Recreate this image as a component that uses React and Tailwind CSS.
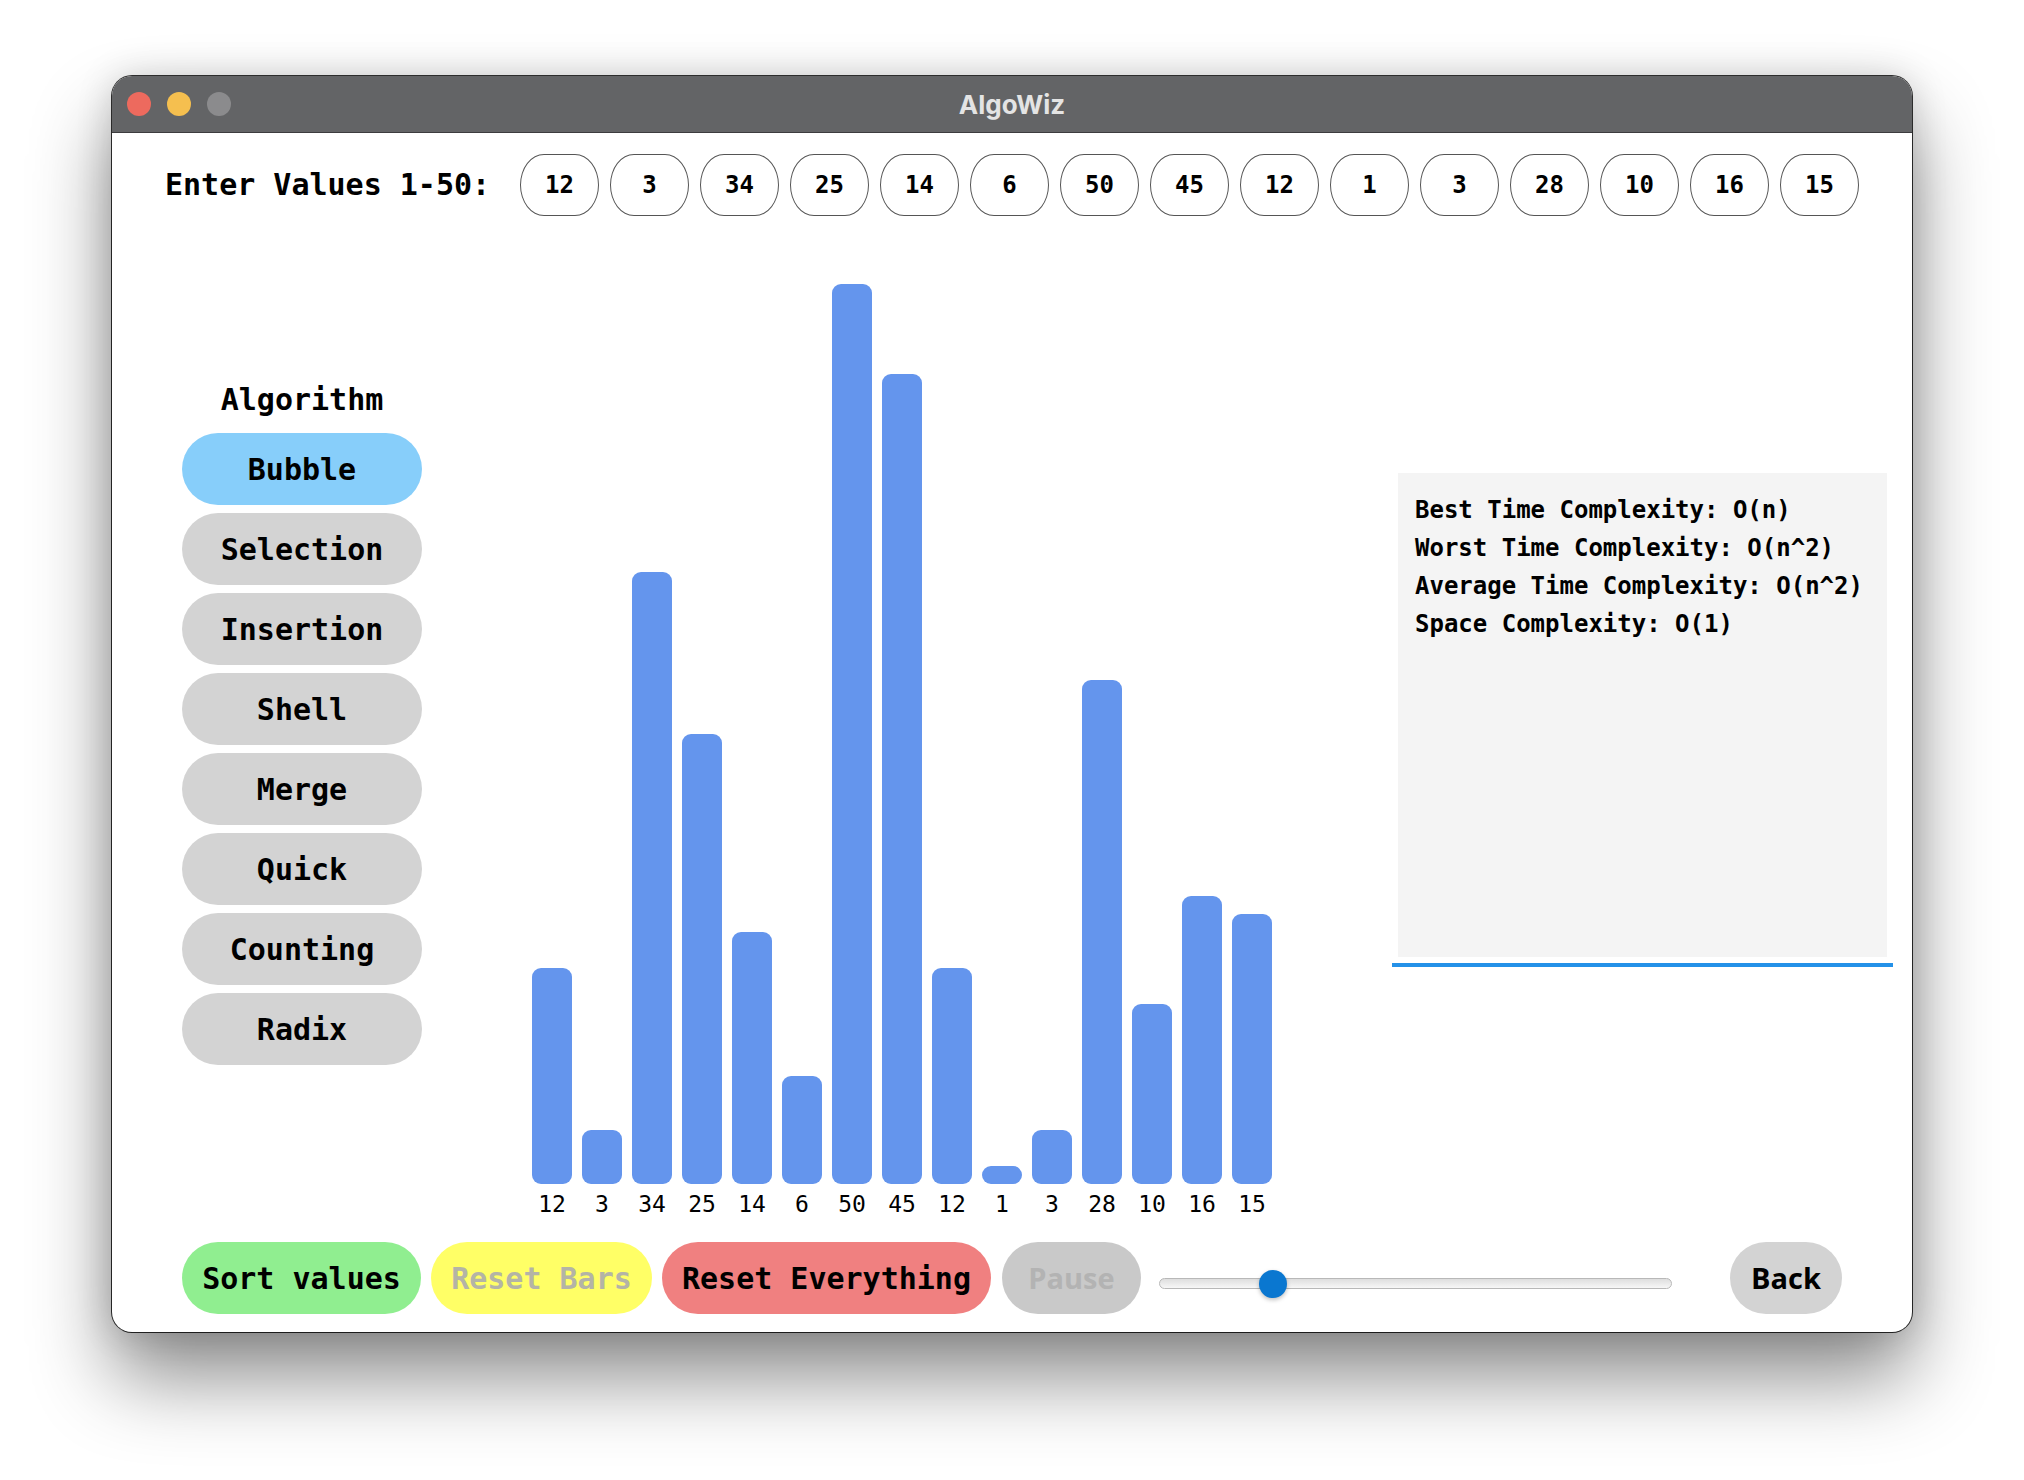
import { useState } from "react";

const values = [12, 3, 34, 25, 14, 6, 50, 45, 12, 1, 3, 28, 10, 16, 15];
const algorithms = ["Bubble", "Selection", "Insertion", "Shell", "Merge", "Quick", "Counting", "Radix"];

const complexity = [
  "Best Time Complexity: O(n)",
  "Worst Time Complexity: O(n^2)",
  "Average Time Complexity: O(n^2)",
  "Space Complexity: O(1)",
];

const App = () => {
  const [selected, setSelected] = useState("Bubble");

  return (
    <div className="w-[2024px] h-[1480px] overflow-hidden bg-white pt-[76px] pl-[112px] font-['DejaVu_Sans_Mono',monospace]">
      {/* window */}
      <div className="w-[1800px] rounded-[20px] overflow-hidden bg-white shadow-[0_0_0_1px_rgba(0,0,0,0.8),0_46px_80px_rgba(0,0,0,0.45),0_0_36px_rgba(0,0,0,0.16)]">
        {/* title bar */}
        <div className="h-[57px] bg-[#636466] border-b border-[#3c3c3e] grid grid-cols-[1fr_auto_1fr] items-center">
          <div className="flex items-center gap-[16px] pl-[15px]">
            <span className="w-[24px] h-[24px] rounded-full bg-[#ed6a5e]" />
            <span className="w-[24px] h-[24px] rounded-full bg-[#f5bf4f]" />
            <span className="w-[24px] h-[24px] rounded-full bg-[#8b8b8d]" />
          </div>
          <div className="font-['Inter',sans-serif] font-bold text-[26px] text-[#e4e4e4]">AlgoWiz</div>
          <div />
        </div>

        {/* content */}
        <div className="h-[1199px] flex flex-col">
          {/* values row */}
          <div className="flex items-center pt-[21px] pl-[53px] h-[83px]">
            <div className="w-[355px] font-bold text-[30px] leading-[36px] text-black">Enter Values 1-50:</div>
            <div className="flex gap-[11px]">
              {values.map((v, i) => (
                <div
                  key={i}
                  className="w-[79px] h-[62px] rounded-[24px/31px] border border-[#555] flex items-center justify-center font-bold text-[24px] text-black"
                >
                  {v}
                </div>
              ))}
            </div>
          </div>

          {/* middle */}
          <div className="flex-1 flex">
            {/* algorithm list */}
            <div className="self-start ml-[70px] pt-[166px] w-[240px] flex flex-col items-center">
              <div className="font-bold text-[30px] leading-[36px] text-black">Algorithm</div>
              <div className="mt-[15px] flex flex-col gap-[8px] w-full">
                {algorithms.map((a) => (
                  <button
                    key={a}
                    onClick={() => setSelected(a)}
                    className={`h-[72px] w-full rounded-full font-bold text-[30px] text-black ${
                      selected === a ? "bg-[#87cefa]" : "bg-[#d3d3d3]"
                    }`}
                  >
                    {a}
                  </button>
                ))}
              </div>
            </div>

            {/* bars */}
            <div className="self-end mb-[24px] ml-[110px] flex items-end gap-[10px]">
              {values.map((v, i) => (
                <div key={i} className="w-[40px] flex flex-col items-center">
                  <div className="w-[40px] rounded-[9px] bg-[#6495ed]" style={{ height: v * 18 }} />
                  <div className="mt-[6px] text-[23px] leading-[28px] text-black">{v}</div>
                </div>
              ))}
            </div>

            {/* complexity panel */}
            <div className="self-start mt-[257px] ml-[120px] w-[501px]">
              <div className="mx-[6px] h-[484px] bg-[#f4f4f4] px-[17px] pt-[18px]">
                {complexity.map((c) => (
                  <div key={c} className="font-bold text-[24px] leading-[38px] text-black whitespace-nowrap">
                    {c}
                  </div>
                ))}
              </div>
              <div className="mt-[6px] h-[4px] bg-[#2491e8]" />
            </div>
          </div>

          {/* bottom controls */}
          <div className="h-[72px] mb-[18px] flex items-center pl-[70px]">
            <button className="w-[239px] h-[72px] rounded-full bg-[#90ee90] font-bold text-[30px] text-black">
              Sort values
            </button>
            <button className="ml-[10px] w-[221px] h-[72px] rounded-full bg-[#ffff66] font-bold text-[30px] text-[#b4b4a6]">
              Reset Bars
            </button>
            <button className="ml-[10px] w-[329px] h-[72px] rounded-full bg-[#f08080] font-bold text-[30px] text-black">
              Reset Everything
            </button>
            <button className="ml-[11px] w-[139px] h-[72px] rounded-full bg-[#c9c9c9] font-['Open_Sans',sans-serif] font-bold text-[29px] text-[#b3b3b3]">
              Pause
            </button>
            <div className="ml-[18px] w-[513px] h-[72px] flex items-center">
              <div className="relative mt-[11px] w-full h-[11px] rounded-full border border-[#b8b8b8] bg-gradient-to-b from-[#dedede] to-[#f7f7f7]">
                <div className="absolute left-[99px] top-1/2 -translate-y-1/2 w-[28px] h-[28px] rounded-full bg-[#0a77d0] shadow-[0_2px_4px_rgba(0,0,0,0.25)]" />
              </div>
            </div>
            <button className="ml-[58px] w-[112px] h-[72px] rounded-full bg-[#d3d3d3] font-['Open_Sans',sans-serif] font-bold text-[29px] text-black">
              Back
            </button>
          </div>
        </div>
      </div>
    </div>
  );
};

export default App;
